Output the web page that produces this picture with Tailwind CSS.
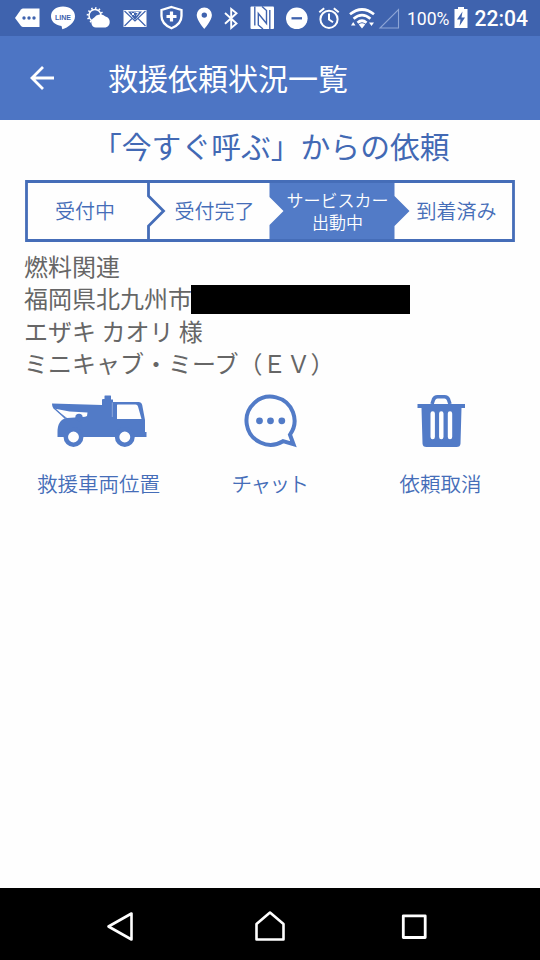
<!DOCTYPE html>
<html lang="ja">
<head>
<meta charset="utf-8">
<title>救援依頼状況一覧</title>
<script src="https://cdn.jsdelivr.net/npm/@tailwindcss/browser@4"></script>
</head>
<body class="bg-white">
<div class="w-[540px] h-[960px] flex flex-col overflow-hidden bg-[#fefefe] font-['Noto_Sans_CJK_JP',sans-serif]">

  <!-- status bar -->
  <div class="h-9 shrink-0 bg-[#3f63ae] flex text-white">
    <svg class="w-[45px] h-9 shrink-0" viewBox="0 0 45 36"><path d="M15 18 21 9.500Q22 8.500 23 8.500H39.500V27H23Q22 27 21 26Z" fill="#fff"/><g fill="#3f63ae"><circle cx="24" cy="18" r="1.700"/><circle cx="29" cy="18" r="1.700"/><circle cx="34" cy="18" r="1.700"/></g></svg>
    <svg class="w-9 h-9 shrink-0" viewBox="45 0 36 36"><path d="M63 6.500C56 6.500 51 10.500 51 16.300 51 21.500 55 25 61.500 26L62.300 29.300C68 27.500 75 23 75 16.300 75 10.500 70 6.500 63 6.500Z" fill="#fff"/><text x="63" y="19.500" text-anchor="middle" textLength="16" lengthAdjust="spacingAndGlyphs" font-family="Liberation Sans, sans-serif" font-weight="bold" font-size="7.500" fill="#3f63ae">LINE</text></svg>
    <svg class="w-9 h-9 shrink-0" viewBox="81 0 36 36"><circle cx="95" cy="15.500" r="6" fill="#3f63ae" stroke="#fff" stroke-width="1.500"/><circle cx="95" cy="15.500" r="7.300" fill="none" stroke="#fff" stroke-width="2" stroke-dasharray="1.500 2.300"/><path d="M96 27.500A5.200 5.200 0 0 1 94 17.800 7.500 7.500 0 0 1 105.500 16.500 5.700 5.700 0 0 1 105.500 27.500Z" fill="#fff"/></svg>
    <svg class="w-9 h-9 shrink-0" viewBox="117 0 36 36"><path d="M123.500 10H146.500V27H123.500Z" fill="#fff"/><path d="M124.500 11 135 21 145.500 11M124.500 26 132 18.500M145.500 26 138 18.500" fill="none" stroke="#3f63ae" stroke-width="1.200"/><path d="M128 11.500H142L135 20Z" fill="#3f63ae"/><path d="m131.500 12.500 3 3M134.500 12.500l-3 3M135.500 12.500h3l-2 3" fill="none" stroke="#fff" stroke-width="1"/></svg>
    <svg class="w-9 h-9 shrink-0" viewBox="153 0 36 36"><path d="M171.500 7 181.500 10V16C181.500 22 177 26 171.500 28.200 166 26 161.500 22 161.500 16V10Z" fill="none" stroke="#fff" stroke-width="2.300"/><path d="M171.500 11.500V21.500M166.500 16.500H176.500" stroke="#fff" stroke-width="3.200"/></svg>
    <svg class="w-[29px] h-9 shrink-0" viewBox="189 0 29 36"><path fill="#fff" fill-rule="evenodd" d="M204.300 7.500A7.600 7.600 0 0 0 196.700 15.100C196.700 20.500 204.300 29 204.300 29S211.900 20.500 211.900 15.100A7.600 7.600 0 0 0 204.300 7.500Zm0 4.900a2.700 2.700 0 1 1 0 5.400a2.700 2.700 0 0 1 0-5.400Z"/></svg>
    <svg class="w-[26px] h-9 shrink-0" viewBox="218 0 26 36"><path d="M225 13 236.500 23.500 231.200 28V9L236.500 13.200 225 23.800" fill="none" stroke="#fff" stroke-width="1.900"/></svg>
    <svg class="w-[36px] h-9 shrink-0" viewBox="244 0 36 36"><rect x="250.500" y="6.500" width="23.500" height="22.500" rx="1" fill="#fff"/><path d="M263 29 258.300 25V13.500L266.500 23.500V10.500L262 6.500M254.800 6.500V25.500M269.800 10V29" fill="none" stroke="#3f63ae" stroke-width="1.400"/></svg>
    <svg class="w-[33px] h-9 shrink-0" viewBox="280 0 33 36"><circle cx="296.800" cy="18.300" r="10.800" fill="#fff"/><path d="M291.500 18.300H302" stroke="#3f63ae" stroke-width="2.300"/></svg>
    <svg class="w-[33px] h-9 shrink-0" viewBox="313 0 33 36"><g fill="none" stroke="#fff" stroke-width="2"><circle cx="329" cy="19.300" r="8.600"/><path d="M329 13.500V19.500L333 22.300M319.300 12.200 324.200 8.200M338.700 12.200 333.800 8.200"/></g></svg>
    <svg class="w-[31px] h-9 shrink-0" viewBox="346 0 31 36"><g fill="none" stroke="#fff" stroke-width="2.700"><path d="M350 14.300Q362 4.700 374 14.300"/><path d="M353.600 18.700Q362 11.700 370.400 18.700"/><path d="M357.500 22.800Q362 18.700 366.500 22.800"/></g><path fill="#fff" d="M358.800 24.500Q362 22 365.200 24.500L362 28.500ZM351 25.500 355.500 25.500 353.200 22ZM369 22.500 374 22.500 371.500 26Z"/></svg>
    <svg class="w-[30px] h-9 shrink-0" viewBox="377 0 30 36"><path d="M380 28H398.500V9.500Z" fill="none" stroke="#8da5d6" stroke-width="1.100"/></svg>
    <svg class="w-[46px] h-9 shrink-0" viewBox="407 0 46 36"><text x="407" y="25" textLength="42.500" lengthAdjust="spacingAndGlyphs" font-family="Roboto, sans-serif" font-size="18.500" fill="#fff">100%</text></svg>
    <svg class="w-[21px] h-9 shrink-0" viewBox="453 0 21 36"><path fill="#fff" d="M454.500 9H458V7H464V9H467.500V28H454.500Z"/><path fill="#3f63ae" d="M462.500 11.500 457 19.500H460.500L459.500 26 465 17.500H461.500Z"/></svg>
    <svg class="w-[66px] h-9 shrink-0" viewBox="474 0 66 36"><text x="474.500" y="26" textLength="53.500" lengthAdjust="spacingAndGlyphs" font-family="Roboto, sans-serif" font-weight="500" font-size="21.500" fill="#fff">22:04</text></svg>
  </div>

  <!-- app bar -->
  <header class="h-[84px] shrink-0 bg-[#4d75c4] flex items-center text-white">
    <svg class="w-[24px] h-[24px] ml-[30px]" viewBox="0 0 24 24" fill="none" stroke="#fff" stroke-width="2.800"><path d="M13 1 2 12 13 23M2 12H24"/></svg>
    <h1 class="ml-[54px] pb-[2px] text-[30px] leading-none font-normal whitespace-nowrap">救援依頼状況一覧</h1>
  </header>

  <main class="flex-1 min-h-0">
    <h2 class="h-[60px] pt-[9px] pl-[92px] text-[29.800px] leading-[32px] text-[#4269b4] whitespace-nowrap">「今すぐ呼ぶ」からの依頼</h2>

    <!-- progress steps -->
    <div class="relative ml-[25px] w-[490px] h-[62px]">
      <svg class="absolute inset-0 w-[490px] h-[62px]" viewBox="25 180 490 62">
        <path d="M269.500 181H394.500V196L409.500 211 394.500 226V241H269.500V225L283.500 211 269.500 197Z" fill="#527bc7"/>
        <path d="M26.500 181.500H513.500V240.500H26.500ZM148.500 182V196L163.500 211 148.500 226V240" fill="none" stroke="#456db8" stroke-width="2.800"/>
      </svg>
      <div class="relative h-full pb-[1px] grid grid-cols-[120px_139px_107px_131px] items-center text-center text-[20px] leading-[21px] font-[350] text-[#456db8] whitespace-nowrap">
        <span>受付中</span>
        <span>受付完了</span>
        <span class="text-white flex flex-col items-center text-[17px] leading-[22px]">
          <span>サービスカー</span>
          <span>出動中</span>
        </span>
        <span>到着済み</span>
      </div>
    </div>

    <!-- request details -->
    <div class="mt-[8px] pl-[24px] text-[24px] leading-[32.300px] text-[#666] whitespace-nowrap">
      <p>燃料関連</p>
      <p class="flex items-center">福岡県北九州市<span class="mt-[2px] w-[219px] h-[29px] bg-black ml-[-1px]"></span></p>
      <p>エザキ カオリ 様</p>
      <p>ミニキャブ・ミーブ（ＥＶ）</p>
    </div>

    <!-- actions -->
    <div class="mt-[6px] pl-[14px] grid grid-cols-[169px_173px_169px] text-center text-[20.500px] leading-[24px] font-[350] text-[#456db8] whitespace-nowrap">
      <div class="flex flex-col items-center">
        <svg class="w-[140px] h-[86px]" viewBox="29.500 385 140 86">
          <path fill="#527bc7" fill-rule="evenodd" d="M52.500 403.500 102.500 405V400Q102.500 399 103.500 399H105V396Q105 395.500 105.500 395.500H111Q111.500 395.500 111.500 396V399.500H113.500V402H139Q142 402 142.700 405L145.500 420V432H147V437H58V432.500C58 424 61 419.500 66.500 418L55 409Q52.500 407.500 52.500 403.500ZM117.500 405V419H142L138.500 406.500Q138 404.500 136 404.500H118Z"/>
          <path fill="#fefefe" d="M54.500 408.500 70 411.500 88 412.500 87.500 416Q86 417 83 417L67.500 418Z"/>
          <path d="M54 407.500 66 418.500" stroke="#527bc7" stroke-width="1.300"/>
          <circle cx="79.500" cy="417.500" r="3.700" fill="#527bc7"/>
          <path d="M112.800 402.500V417" stroke="#a9bde3" stroke-width=".7"/>
          <circle cx="74" cy="437" r="7.700" fill="#fefefe" stroke="#527bc7" stroke-width="4.500"/>
          <circle cx="125.300" cy="437" r="7.700" fill="#fefefe" stroke="#527bc7" stroke-width="4.500"/>
        </svg>
        <span>救援車両位置</span>
      </div>
      <div class="flex flex-col items-center">
        <svg class="w-[110px] h-[86px]" viewBox="214.500 385 110 86">
          <path d="M282.500 441.200A24 24 0 1 1 289.500 434.700L293 444.200Z" fill="none" stroke="#527bc7" stroke-width="4"/>
          <g fill="#527bc7"><circle cx="259" cy="420.800" r="3.400"/><circle cx="270" cy="420.800" r="3.400"/><circle cx="281.300" cy="420.800" r="3.400"/></g>
        </svg>
        <span class="tracking-[-1.500px]">チャット</span>
      </div>
      <div class="flex flex-col items-center">
        <svg class="w-[110px] h-[86px]" viewBox="385.500 385 110 86">
          <path d="M431.500 404 433 399.500Q434 396.800 437 396.800H444Q447 396.800 448 399.500L449.500 404" fill="none" stroke="#527bc7" stroke-width="3.600"/>
          <path d="M417 404H464.500V408H461L460 443.500Q459.800 447 456 447H426Q422.200 447 422 443.500L421 408H417Z" fill="#527bc7"/>
          <path d="M432.200 413.500V437M440.800 413.500V437M449.500 413.500V437" stroke="#fff" stroke-width="4.400" stroke-linecap="round"/>
        </svg>
        <span>依頼取消</span>
      </div>
    </div>
  </main>

  <!-- navigation bar -->
  <nav class="h-[72px] shrink-0 bg-black grid grid-cols-[50px_144px_152px_136px_58px]">
    <span></span>
    <svg class="w-[144px] h-[72px]" viewBox="50 888 144 72"><path d="M108.500 926.500 131.500 913.500V939.500Z" fill="none" stroke="#fff" stroke-width="2.600" stroke-linejoin="round"/></svg>
    <svg class="w-[152px] h-[72px]" viewBox="194 888 152 72"><path d="M256.500 939.500V924L270 912.500 283.500 924V939.500Z" fill="none" stroke="#fff" stroke-width="2.600" stroke-linejoin="round"/></svg>
    <svg class="w-[136px] h-[72px]" viewBox="346 888 136 72"><path d="M403.300 915.800H425.200V937.500H403.300Z" fill="none" stroke="#fff" stroke-width="2.800" stroke-linejoin="round"/></svg>
    <span></span>
  </nav>
</div>
</body>
</html>
